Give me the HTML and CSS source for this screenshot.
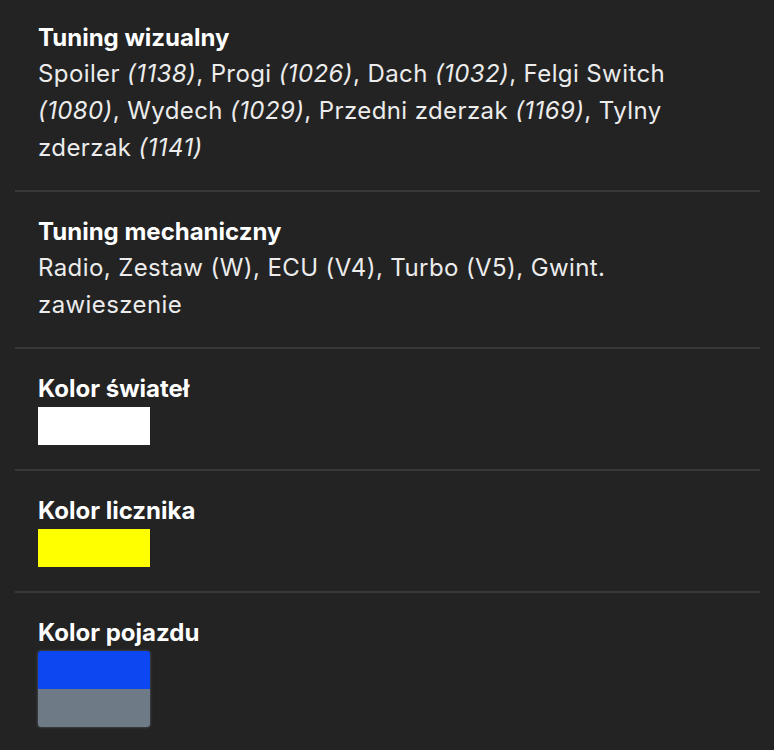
FILE: index.html
```html
<!DOCTYPE html>
<html lang="pl">
<head>
    <meta charset="UTF-8">
    <meta name="viewport" content="width=device-width, initial-scale=1.0">
    <title>Szczegóły pojazdu</title>
    <link rel="stylesheet" href="styles.css">
</head>
<body>
    <div class="details">
        <section class="detail">
            <h3>Tuning wizualny</h3>
            <p>Spoiler <i>(1138)</i>, Progi <i>(1026)</i>, Dach <i>(1032)</i>, Felgi Switch <i>(1080)</i>, Wydech <i>(1029)</i>, Przedni zderzak <i>(1169)</i>, Tylny zderzak <i>(1141)</i></p>
        </section>

        <section class="detail">
            <h3>Tuning mechaniczny</h3>
            <p>Radio, Zestaw (W), ECU (V4), Turbo (V5), Gwint. zawieszenie</p>
        </section>

        <section class="detail color">
            <h3>Kolor świateł</h3>
            <div class="swatch lights"></div>
        </section>

        <section class="detail color">
            <h3>Kolor licznika</h3>
            <div class="swatch gauge"></div>
        </section>

        <section class="detail color">
            <h3>Kolor pojazdu</h3>
            <div class="swatch paint">
                <div class="paint-primary"></div>
                <div class="paint-secondary"></div>
            </div>
        </section>
    </div>
</body>
</html>
```

FILE: styles.css
```css
* {
    margin: 0;
    padding: 0;
    box-sizing: border-box;
}
body {
    background-color: #232323;
    color: #ececec;
    font-family: 'Inter', 'Noto Sans', sans-serif;
}
.details {
    padding: 0 14px 0 15px;
}
.detail {
    padding: 26px 23px 24px;
    border-bottom: 2px solid #393939;
}
.detail:first-child {
    padding-top: 24px;
}
.detail:last-child {
    border-bottom: none;
}
.detail h3 {
    font-size: 24px;
    font-weight: 700;
    line-height: 28px;
    color: #ffffff;
    margin-bottom: 3px;
}
.detail p {
    font-size: 24px;
    line-height: 37px;
    letter-spacing: 0.4px;
}
.detail p i {
    font-style: italic;
}
.swatch {
    width: 112px;
    height: 38px;
    margin-top: 4px;
}
.lights {
    background-color: #ffffff;
}
.gauge {
    background-color: #ffff00;
}
.paint {
    height: 76px;
    border-radius: 3px;
    overflow: hidden;
    box-shadow: 0 0 3px rgba(160, 170, 190, 0.45);
}
.paint-primary {
    height: 50%;
    background-color: #0c47f2;
}
.paint-secondary {
    height: 50%;
    background-color: #6e7a86;
}
```
